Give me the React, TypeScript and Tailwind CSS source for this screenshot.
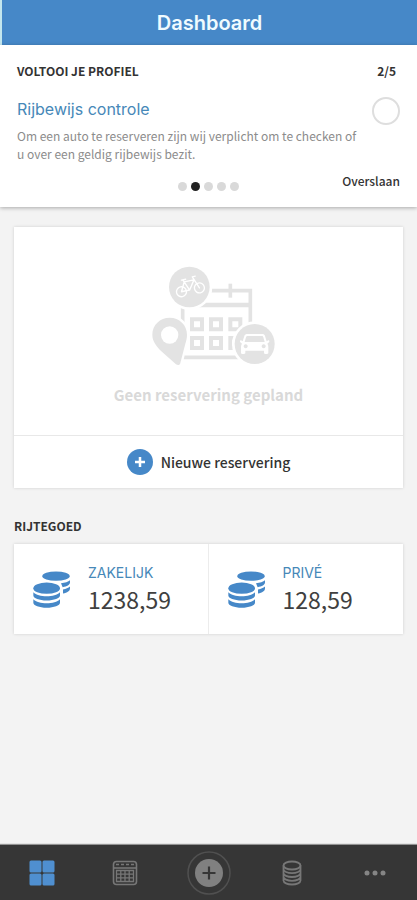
import { useState, type ReactNode } from 'react';

const STEPS = 5;

const BALANCES = [
  { label: 'ZAKELIJK', amount: '1238,59' },
  { label: 'PRIVÉ', amount: '128,59' },
];

function EmptyIllustration() {
  return (
    <svg viewBox="36 30 402 306" className="h-[102px] w-[134px]" aria-hidden="true">
      <g fill="none" stroke="#e3e3e3" strokeWidth="11">
        <path d="M158 107v200h203V107z" />
        <path d="M158 150h203" strokeWidth="14" />
        <path d="M301 86v42" />
        <path
          d="M186 193h30v30h-30zM243 193h30v30h-30zM301 193h30v30h-30zM186 249h30v30h-30zM243 249h30v30h-30zM301 249h30v30h-30z"
          strokeWidth="12"
        />
      </g>

      {/* map pin */}
      <path
        d="M119 188c-29 0-52 22-52 51 0 20 12 34 27 50l44 39c5 4 12 3 13-4l15-58c3-9 5-18 5-27 0-29-23-51-52-51z"
        fill="#e3e3e3"
        stroke="#fff"
        strokeWidth="14"
        paintOrder="stroke"
      />
      <circle cx="119" cy="240" r="26" fill="#fff" />

      {/* bicycle */}
      <circle cx="178" cy="96" r="61" fill="#e3e3e3" stroke="#fff" strokeWidth="16" paintOrder="stroke" />
      <g transform="rotate(-12 178 96)" fill="none" stroke="#fff" strokeWidth="4" strokeLinecap="round" strokeLinejoin="round">
        <circle cx="152" cy="105" r="15" />
        <circle cx="207" cy="105" r="15" />
        <path d="M152 105l14-27h30l-19 27h-25M166 78l11 27M207 105l-14-37h9M159 71h13M166 78l-3-7" />
      </g>

      {/* car */}
      <circle cx="374" cy="267" r="60" fill="#e3e3e3" stroke="#fff" strokeWidth="16" paintOrder="stroke" />
      <path
        fillRule="evenodd"
        fill="#fff"
        d="M353 237h43c5 0 8 2 9 6l5 16 5-3c3 0 4 4 2 6l-5 4c3 4 3 8 3 14v14c0 4-13 4-13 0v-7h-56v7c0 4-13 4-13 0v-14c0-6 0-10 3-14l-5-4c-2-2-1-6 2-6l5 3 5-16c1-4 5-6 10-6zm0 6c-3 0-4 1-5 4l-4 14h60l-4-14c-1-3-2-4-5-4zM347 268a6 6 0 1 0 .1 0zM401 268a6 6 0 1 0 .1 0z"
      />
    </svg>
  );
}

function CoinsIcon() {
  return (
    <svg viewBox="0 0 111 110" className="h-[37px] w-[37px] shrink-0" fill="#4688c8" aria-hidden="true">
      <ellipse cx="69" cy="15" rx="41" ry="14" />
      <path d="M84 36c12-1 22-5 27-9v7c0 7-9 12-22 14zM90 55c9-2 16-5 21-9v6c0 7-8 13-21 15z" />
      <ellipse cx="41" cy="51" rx="43" ry="20" fill="#fff" />
      <ellipse cx="41" cy="51" rx="40" ry="17" />
      <path d="M1 63c8 8 23 12 40 12s32-4 40-12v10c0 8-18 15-40 15S1 81 1 73zM1 84c8 8 23 12 40 12s32-4 40-12v11c0 8-18 15-40 15S1 103 1 95z" />
    </svg>
  );
}

function PlusDisc({ className }: { className: string }) {
  return (
    <svg viewBox="0 0 26 26" className={className} aria-hidden="true">
      <circle cx="13" cy="13" r="13" fill="currentColor" />
      <path d="M13 8v10M8 13h10" stroke="#fff" strokeWidth="2.5" />
    </svg>
  );
}

function NavButton({ label, children }: { label: string; children: ReactNode }) {
  return (
    <button type="button" aria-label={label} className="flex h-full flex-1 items-center justify-center">
      {children}
    </button>
  );
}

export default function App() {
  const [step, setStep] = useState(1);
  const [checked, setChecked] = useState(false);

  return (
    <div className="flex min-h-screen flex-col bg-[#f3f3f3] font-['Noto_Sans_CJK_SC',sans-serif] text-[#333333]">
      <header className="flex h-[45px] items-center justify-center border-l-2 border-[#c3e6ee] bg-[#4688c8]">
        <h1 className="font-['Inter',sans-serif] text-xl leading-6 font-semibold text-[#f0fbff]">Dashboard</h1>
      </header>

      <section className="bg-white px-[17px] pt-4 pb-4 shadow-[0_1px_4px_rgba(0,0,0,0.3)]">
        <div className="flex items-center justify-between text-xs leading-5 font-bold">
          <h2>VOLTOOI JE PROFIEL</h2>
          <span className="pr-1">2/5</span>
        </div>

        <div className="mt-4 flex items-start justify-between">
          <div>
            <label htmlFor="license" className="block font-['Inter',sans-serif] text-base leading-6 text-[#4688b8]">
              Rijbewijs controle
            </label>
            <p className="mt-1.5 max-w-[342px] text-xs leading-[18px] text-[#8c8c8c]">
              Om een auto te reserveren zijn wij verplicht om te checken of u over een geldig rijbewijs bezit.
            </p>
          </div>
          <input
            id="license"
            type="checkbox"
            checked={checked}
            onChange={(e) => setChecked(e.target.checked)}
            className="h-7 w-7 shrink-0 appearance-none rounded-full border-2 border-[#dedede] checked:bg-[#4688c8]"
          />
        </div>

        <div className="mt-2 grid grid-cols-[1fr_auto_1fr] items-end">
          <div className="col-start-2 flex gap-1">
            {Array.from({ length: STEPS }, (_, i) => (
              <button
                key={i}
                type="button"
                aria-label={`Stap ${i + 1}`}
                onClick={() => setStep(i)}
                className={`h-[9px] w-[9px] rounded-full ${i === step ? 'bg-[#222222]' : 'bg-[#d9d9d9]'}`}
              />
            ))}
          </div>
          <button
            type="button"
            onClick={() => setStep((step + 1) % STEPS)}
            className="justify-self-end text-xs leading-5 font-medium"
          >
            Overslaan
          </button>
        </div>
      </section>

      <main className="flex-1 px-[14px] pt-5">
        <section className="bg-white shadow-[0_0_3px_rgba(0,0,0,0.15)]">
          <div className="flex flex-col items-center pt-[38px] pb-7">
            <EmptyIllustration />
            <p className="mt-4 text-[15px] leading-6 font-bold text-[#d9d9d9]">Geen reservering gepland</p>
          </div>
          <button
            type="button"
            className="flex h-[53px] w-full items-center justify-center gap-2 border-t border-[#e8e8e8] text-sm font-medium"
          >
            <PlusDisc className="h-[26px] w-[26px] text-[#4688c8]" />
            Nieuwe reservering
          </button>
        </section>

        <h2 className="mt-7 text-xs leading-5 font-bold">RIJTEGOED</h2>
        <section className="mt-2 grid h-[90px] grid-cols-2 divide-x divide-[#ececec] bg-white shadow-[0_0_3px_rgba(0,0,0,0.15)]">
          {BALANCES.map((b) => (
            <div key={b.label} className="flex items-center gap-[18px] pl-[19px]">
              <CoinsIcon />
              <div>
                <p className="font-['Inter',sans-serif] text-sm leading-5 text-[#4688b8]">{b.label}</p>
                <p className="text-[23px] leading-8 text-[#404040]">{b.amount}</p>
              </div>
            </div>
          ))}
        </section>
      </main>

      <nav className="flex h-[55px] items-center bg-[#363636] text-[#777777] shadow-[0_-1px_1px_rgba(0,0,0,0.4)]">
        <NavButton label="Dashboard">
          <svg viewBox="0 0 26 26" className="h-[26px] w-[26px]" fill="#4f8fd0">
            <rect x="0.5" y="0.5" width="12" height="12" rx="1.5" />
            <rect x="13.5" y="0.5" width="12" height="12" rx="1.5" />
            <rect x="0.5" y="13.5" width="12" height="12" rx="1.5" />
            <rect x="13.5" y="13.5" width="12" height="12" rx="1.5" />
          </svg>
        </NavButton>
        <NavButton label="Agenda">
          <svg viewBox="0 0 26 26" className="h-[26px] w-[26px]" fill="none" stroke="currentColor">
            <rect x="1.5" y="1.5" width="23" height="23" rx="3" strokeWidth="1.6" />
            <path d="M2 8h22" strokeWidth="1.6" />
            <path d="M4 4.5h18" strokeWidth="1.4" strokeDasharray="3 2" />
            <path d="M4.5 10.5h17v11h-17zM4.5 14.2h17M4.5 17.9h17M8.8 10.5v11M13 10.5v11M17.2 10.5v11" strokeWidth="1.3" />
          </svg>
        </NavButton>
        <NavButton label="Nieuwe reservering">
          <svg viewBox="0 0 44 44" className="h-11 w-11">
            <circle cx="22" cy="22" r="21" fill="none" stroke="#505050" strokeWidth="1.5" />
            <circle cx="22" cy="22" r="14" fill="#808080" />
            <path d="M22 15.5v13M15.5 22h13" stroke="#363636" strokeWidth="2.2" />
          </svg>
        </NavButton>
        <NavButton label="Rijtegoed">
          <svg viewBox="0 0 20 26" className="h-[26px] w-5" fill="none" stroke="currentColor" strokeWidth="1.8">
            <ellipse cx="10" cy="5.5" rx="8.5" ry="4" />
            <path d="M1.5 5.5v15c0 2.2 3.800 4 8.500 4s8.500-1.800 8.500-4v-15M1.500 9.200c0 2.200 3.800 4 8.500 4s8.500-1.800 8.500-4M1.500 13c0 2.200 3.800 4 8.500 4s8.500-1.800 8.500-4M1.500 16.800c0 2.200 3.800 4 8.500 4s8.500-1.800 8.500-4" />
          </svg>
        </NavButton>
        <NavButton label="Meer">
          <svg viewBox="0 0 22 6" className="h-[6px] w-[22px]" fill="#858585">
            <circle cx="3" cy="3" r="2.5" />
            <circle cx="11" cy="3" r="2.5" />
            <circle cx="19" cy="3" r="2.5" />
          </svg>
        </NavButton>
      </nav>
    </div>
  );
}
